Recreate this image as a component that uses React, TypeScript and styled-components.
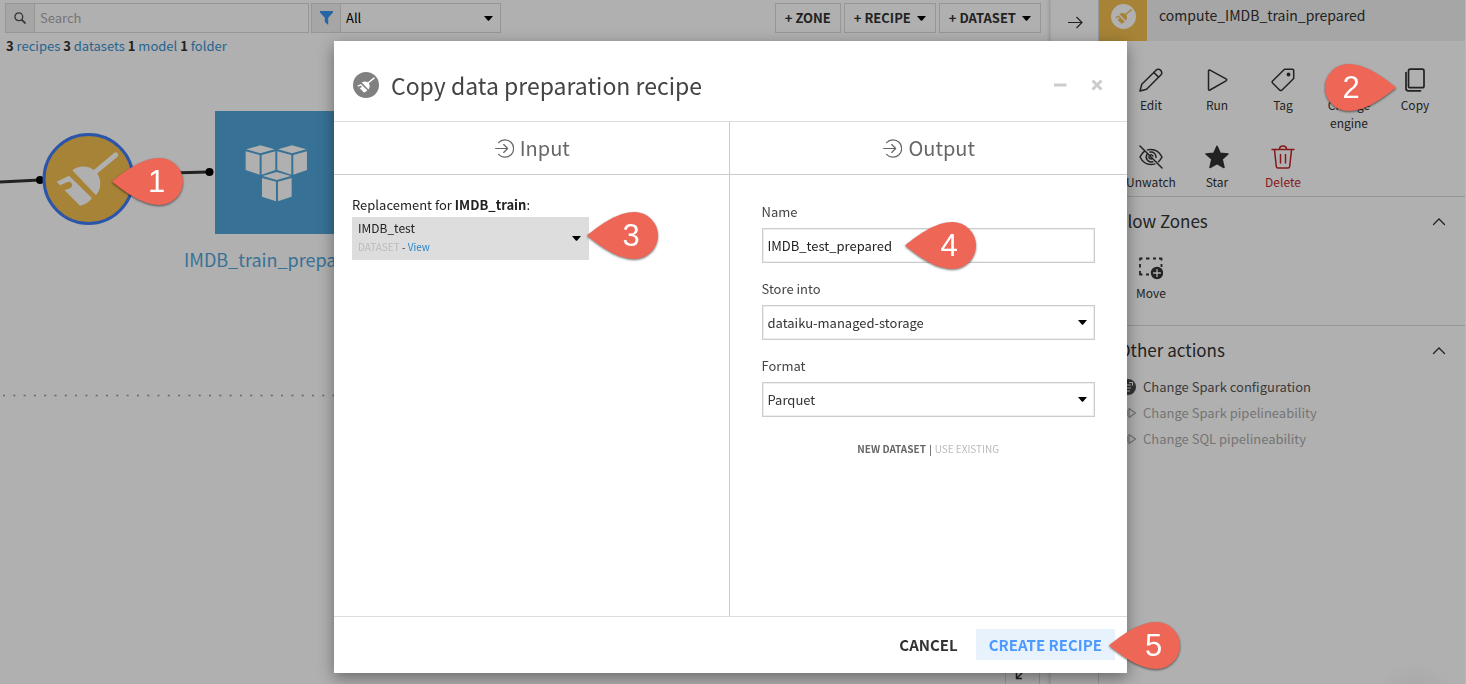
import React from 'react';
import styled, { createGlobalStyle } from 'styled-components';

const color = {
  page: '#b0b0b0',
  shade: '#a6a6a6',
  line: '#969696',
  ink: '#222222',
  link: '#26648f',
  node: '#377296',
  recipe: '#a68336',
  callout: '#ee6655',
};

const GlobalStyle = createGlobalStyle`
  * { box-sizing: border-box; }
  body {
    margin: 0;
    background: ${color.page};
    color: ${color.ink};
    font-family: "Noto Sans CJK SC", "Noto Sans", sans-serif;
    font-size: 13px;
    line-height: 18px;
  }
  button, input, select { font: inherit; color: inherit; margin: 0; }
  button { cursor: pointer; }
  a { text-decoration: none; }
`;

/* ---------- page shell ---------- */

const Shell = styled.div`
  display: flex;
  height: 100vh;
  min-height: 480px;
  overflow: hidden;
`;

const FlowPane = styled.main`
  flex: 1;
  min-width: 0;
  display: flex;
  flex-direction: column;
`;

const Toolbar = styled.div`
  display: flex;
  align-items: center;
  gap: 3px;
  padding: 3px 9px 0 5px;
`;

const Filters = styled.div`
  display: flex;
  gap: 2px;
`;

const Group = styled.div<{ $width: number }>`
  position: relative;
  display: flex;
  width: ${(p) => p.$width}px;
  height: 30px;
  border: 1px solid ${color.line};
`;

const GroupIcon = styled.label`
  display: flex;
  align-items: center;
  justify-content: center;
  flex: 0 0 29px;
  background: ${color.shade};
  border-right: 1px solid ${color.line};
`;

const SearchInput = styled.input`
  flex: 1;
  min-width: 0;
  border: 0;
  padding: 0 5px;
  background: transparent;
  outline: none;
  &::placeholder { color: #747474; opacity: 1; }
`;

const PlainSelect = styled.select`
  flex: 1;
  min-width: 0;
  appearance: none;
  border: 0;
  padding: 0 5px;
  background: transparent;
  outline: none;
`;

const FilterSelect = styled(PlainSelect)`
  color: #000;
`;

const CaretSvg = styled.svg`
  flex: none;
  display: block;
  pointer-events: none;
`;

const Caret = () => (
  <CaretSvg width="9" height="5" viewBox="0 0 9 5" aria-hidden="true">
    <path d="M0 0h9L5.2 4.5Q4.5 5 3.8 4.5z" fill="#000" />
  </CaretSvg>
);

const CaretSlot = styled.span`
  display: flex;
  align-items: center;
  padding-right: 7px;
`;

const Spacer = styled.div`
  flex: 1;
`;

const ToolButton = styled.button`
  display: flex;
  align-items: center;
  gap: 6px;
  height: 30px;
  padding: 0 9px;
  border: 1px solid ${color.line};
  background: transparent;
  font-size: 13px;
  font-weight: 700;
  white-space: nowrap;
`;

const Summary = styled.p`
  margin: 0;
  padding: 4px 6px;
  a { color: ${color.link}; }
`;

/* ---------- flow canvas ---------- */

const Canvas = styled.div`
  position: relative;
  flex: 1;
  overflow: hidden;
`;

const Graph = styled.svg`
  position: absolute;
  left: 0;
  top: 0;
  width: 100%;
  height: 100%;
`;

const NodeLabel = styled.div`
  position: absolute;
  left: 184px;
  top: 188px;
  color: ${color.node};
  font-size: 18px;
  line-height: 24px;
`;

const CornerButton = styled.button`
  position: absolute;
  right: 10px;
  bottom: -6px;
  width: 35px;
  height: 36px;
  padding: 0;
  border: 1px solid ${color.line};
  background: transparent;
`;

/* ---------- right panel ---------- */

const Panel = styled.aside`
  display: flex;
  flex: 0 0 416px;
  border-left: 1px solid #a4a4a4;
  box-shadow: -1px 0 3px rgba(0, 0, 0, 0.15);
`;

const Rail = styled.div`
  flex: 0 0 48px;
  display: flex;
  justify-content: center;
  align-items: flex-start;
  padding-top: 14px;
  border-right: 1px solid ${color.line};
`;

const BareButton = styled.button`
  display: flex;
  padding: 0;
  border: 0;
  background: none;
`;

const PanelBody = styled.div`
  flex: 1;
  min-width: 0;
  border-right: 1px solid #b8b8b8;
  background: radial-gradient(circle 44px at calc(100% - 50px) calc(100% + 22px), #a4a4a4, ${color.page});
`;

const PanelHead = styled.header`
  display: flex;
  height: 41px;
  background: ${color.shade};
`;

const RecipeTile = styled.div`
  flex: 0 0 48px;
  display: flex;
  justify-content: center;
  padding-top: 4px;
  background: ${color.recipe};
`;

const PanelTitle = styled.h2`
  margin: 0;
  padding: 5px 12px;
  font-size: 14px;
  line-height: 20px;
  font-weight: 400;
`;

const Section = styled.section<{ $last?: boolean }>`
  border-bottom: ${(p) => (p.$last ? '0' : `1px solid ${color.line}`)};
`;

const SectionHead = styled.div`
  display: flex;
  align-items: center;
  justify-content: space-between;
  padding: 12px 19px;
`;

const SectionTitle = styled.h3`
  margin: 0;
  font-size: 17px;
  line-height: 24px;
  font-weight: 400;
`;

const ActionGrid = styled.div<{ $top: number; $bottom: number }>`
  position: relative;
  display: grid;
  grid-template-columns: repeat(5, 66px);
  row-gap: 13px;
  padding: ${(p) => p.$top}px 0 ${(p) => p.$bottom}px 19px;
`;

const Action = styled.button<{ $danger?: boolean }>`
  display: flex;
  flex-direction: column;
  align-items: center;
  justify-content: flex-start;
  gap: 4px;
  padding: 0;
  border: 0;
  background: none;
  color: ${(p) => (p.$danger ? '#86181c' : color.ink)};
  font-size: 12px;
  line-height: 18px;
`;

const List = styled.ul`
  list-style: none;
  margin: 0;
  padding: 0 20px;
`;

const ListButton = styled.button<{ $muted?: boolean }>`
  display: flex;
  align-items: center;
  gap: 6px;
  height: 26px;
  padding: 0;
  border: 0;
  background: none;
  color: ${(p) => (p.$muted ? '#747474' : '#3a3a3a')};
`;

/* ---------- dialog ---------- */

const Overlay = styled.div`
  position: fixed;
  inset: 0;
  display: flex;
  justify-content: center;
  padding: 41px 5px 11px 0;
`;

const Dialog = styled.div`
  width: 100%;
  max-width: 793px;
  display: flex;
  flex-direction: column;
  background: #fff;
  color: #333;
  box-shadow: 0 5px 15px rgba(0, 0, 0, 0.4);
`;

const DialogHead = styled.header`
  display: flex;
  align-items: center;
  gap: 12px;
  height: 81px;
  padding: 8px 24px 0 19px;
  border-bottom: 1px solid #ddd;
`;

const DialogTitle = styled.h1`
  flex: 1;
  margin: 0;
  color: #444;
  font-size: 23px;
  line-height: 32px;
  font-weight: 400;
`;

const WindowButtons = styled.div`
  display: flex;
  gap: 24px;
`;

const Columns = styled.div`
  flex: 1;
  display: grid;
  grid-template-columns: calc(50% - 2px) 1fr;
`;

const Column = styled.section`
  display: flex;
  flex-direction: column;
  & + & { border-left: 1px solid #ccc; }
`;

const ColumnTitle = styled.h2`
  display: flex;
  align-items: center;
  justify-content: center;
  gap: 6px;
  height: 53px;
  margin: 0;
  padding-left: 2px;
  border-bottom: 1px solid #ccc;
  color: #666;
  font-size: 20px;
  line-height: 28px;
  font-weight: 400;
`;

const InputBody = styled.div`
  padding: 21px 18px;
`;

const Replacement = styled.label`
  display: block;
  color: #222;
`;

const DatasetPicker = styled.div`
  position: relative;
  display: flex;
  align-items: center;
  justify-content: space-between;
  width: 66%;
  height: 43px;
  margin-top: 3px;
  padding: 0 8px 0 6px;
  background: #ddd;
`;

const DatasetText = styled.div`
  flex: 1;
  display: flex;
  flex-direction: column;
  gap: 2px;
  padding-bottom: 3px;
`;

const DatasetSelect = styled(PlainSelect)`
  flex: none;
  height: 18px;
  padding: 0;
  color: #222;
  font-size: 12px;
  line-height: 18px;
`;

const DatasetMeta = styled.div`
  color: #333;
  font-size: 10px;
  line-height: 16px;
  span { color: #bbb; }
  a { color: #2a85cc; }
`;

const OutputBody = styled.div`
  display: flex;
  flex-direction: column;
  gap: 14px;
  padding: 25px 32px;
`;

const Field = styled.div`
  position: relative;
  display: flex;
  flex-direction: column;
  gap: 4px;
  line-height: 24px;
`;

const FieldLabel = styled.label`
  color: #444;
`;

const FieldBox = styled.div`
  display: flex;
  align-items: center;
  height: 35px;
  border: 1px solid #ccc;
  box-shadow: inset 0 0 0 1px #eee;
`;

const FieldInput = styled.input`
  flex: 1;
  min-width: 0;
  border: 0;
  padding: 0 5px;
  background: transparent;
  color: #222;
  outline: none;
`;

const Mode = styled.div`
  display: flex;
  justify-content: center;
  gap: 3px;
  padding-top: 8px;
  font-size: 10px;
  line-height: 20px;
`;

const ModeButton = styled.button<{ $active?: boolean }>`
  padding: 0;
  border: 0;
  background: none;
  font-weight: ${(p) => (p.$active ? 700 : 400)};
  color: ${(p) => (p.$active ? '#666' : '#bbb')};
`;

const DialogFoot = styled.footer`
  position: relative;
  display: flex;
  align-items: center;
  justify-content: flex-end;
  gap: 5px;
  height: 57px;
  padding: 0 12px 1px;
  border-top: 1px solid #ddd;
`;

const FootButton = styled.button<{ $primary?: boolean }>`
  height: 31px;
  padding: 0 13px;
  border: 0;
  background: ${(p) => (p.$primary ? '#e8f2fd' : 'none')};
  color: ${(p) => (p.$primary ? '#4c9aff' : '#333')};
  font-size: 15px;
  font-weight: 700;
`;

/* ---------- callouts ---------- */

const CalloutBox = styled.span<{ $x: string; $y: string }>`
  position: absolute;
  left: ${(p) => p.$x};
  top: ${(p) => p.$y};
  width: 71px;
  height: 47px;
  z-index: 5;
  pointer-events: none;
  filter: drop-shadow(0 1px 1px rgba(0, 0, 0, 0.55));
  svg { position: absolute; inset: 0; }
`;

const CalloutDigit = styled.span<{ $flip?: boolean }>`
  position: absolute;
  top: 0;
  ${(p) => (p.$flip ? 'left: 0; width: 52px;' : 'right: 0; width: 53px;')}
  text-align: center;
  color: #fff;
  font-family: "Liberation Sans", Arial, sans-serif;
  font-size: 31px;
  line-height: 47px;
`;

function Callout({ n, x, y, flip }: { n: number; x: string; y: string; flip?: boolean }) {
  return (
    <CalloutBox $x={x} $y={y}>
      <svg width="71" height="47" viewBox="0 0 71 47" aria-hidden="true">
        <path
          transform={flip ? 'translate(71 0) scale(-1 1)' : undefined}
          d="M0 23.5C14 12 31 0 47.5 0a23.5 23.5 0 0 1 0 47C31 47 14 35 0 23.5z"
          fill={color.callout}
        />
      </svg>
      <CalloutDigit $flip={flip}>{n}</CalloutDigit>
    </CalloutBox>
  );
}

/* ---------- drawings ---------- */

const Broom = ({ fill }: { fill: string }) => (
  <g fill={fill}>
    <path d="M347 165L284 217" stroke={fill} strokeWidth="15" strokeLinecap="round" />
    <path d="M217 211C232 198 262 195 280 209C302 222 310 262 288 286z" />
    <path d="M170 245L207 227L276 294Q262 313 240 317L193 270L205 267Q219 262 216 252Q213 243 202 246L180 256z" />
  </g>
);

const BroomBadge = ({ size, disc, fill }: { size: number; disc: string; fill: string }) => (
  <svg width={size} height={size} viewBox="124 100 276 276" aria-hidden="true">
    <circle cx="262" cy="238" r="138" fill={disc} />
    <Broom fill={fill} />
  </svg>
);

const Cube = ({ x, y }: { x: number; y: number }) => (
  <g transform={`translate(${x} ${y})`} fill={color.page}>
    <path d="M2 12L44 0L87 12L44 24z" />
    <path d="M0 18L42 29V88L0 74z" />
    <path d="M48 29L89 18V74L48 88z" />
  </g>
);

const FlowGraph = () => (
  <Graph aria-hidden="true">
    <g transform="translate(0 -59)">
      <path d="M0 182L40 180M130 174L209 172" stroke="#222" strokeWidth="3" />
      <circle cx="40" cy="180" r="4" />
      <circle cx="209.500" cy="172" r="4" />
      <circle cx="88.500" cy="179" r="44.500" fill={color.recipe} stroke="#2a55aa" strokeWidth="3" />
      <g transform="translate(0 100) scale(0.3333)">
        <Broom fill={color.page} />
      </g>
      <path d="M215 111h124v123H215z" fill={color.node} />
      <g transform="translate(0 100) scale(0.3333)">
        <Cube x={737} y={136} />
        <Cube x={832} y={136} />
        <Cube x={786} y={216} />
      </g>
      <path d="M3 395.500H1040" stroke="#666" strokeWidth="1.500" strokeDasharray="2 8.300" />
    </g>
  </Graph>
);

const Stroke = ({ size = 24, w = 1.5, children }: { size?: number; w?: number; children: React.ReactNode }) => (
  <svg
    width={size}
    height={size}
    viewBox="0 0 24 24"
    fill="none"
    stroke="currentColor"
    strokeWidth={w}
    strokeLinecap="round"
    strokeLinejoin="round"
    aria-hidden="true"
  >
    {children}
  </svg>
);

const icons = {
  edit: (
    <Stroke>
      <path d="M1 23L2.800 16.300L17 2.200Q19.500 .2 21.800 2.400Q23.800 4.700 21.800 7L7.600 21.200zM14.800 4.400L19.600 9.200" />
    </Stroke>
  ),
  run: (
    <Stroke>
      <path d="M3.500 3.200Q3.500 1.500 5 2.200L21 10.800Q22.500 11.800 21 12.800L5 22Q3.500 22.700 3.500 21z" />
    </Stroke>
  ),
  tag: (
    <Stroke>
      <path d="M21.500 1.300H13.500L1.600 13Q.7 14 1.600 15L8.800 22.200Q9.800 23 10.800 22.200L22.700 10.500V2.500Q22.700 1.300 21.500 1.300z" />
      <circle cx="17.500" cy="6.500" r="1.200" fill="currentColor" />
    </Stroke>
  ),
  engine: (
    <Stroke>
      <circle cx="12" cy="12" r="8" />
    </Stroke>
  ),
  copy: (
    <Stroke w={1.7}>
      <rect x="5.500" y="1.200" width="15.500" height="18.500" rx="1.800" />
      <path d="M3 4.500V20.500Q3 22.800 5.300 22.800H17.500" />
    </Stroke>
  ),
  unwatch: (
    <Stroke>
      <path d="M1 1L23 23M5.300 6.300Q2.500 8.500 1 12Q4.800 19.500 12 19.500Q14 19.500 15.800 18.900M8.500 4.900Q10 4.500 12 4.500Q19.200 4.500 23 12Q21.600 14.800 19.500 16.700" />
      <path d="M8 9.300A5 5 0 0 0 13.800 16.700M11 7.100A5 5 0 0 1 17 12.500M10.700 10.500Q12.500 9 14 11M9.800 12Q10.500 14 12.500 14" />
    </Stroke>
  ),
  star: (
    <Stroke>
      <path d="M12 1.200L15.200 8.300L23 9L17.100 14.200L19 22.500L12 18.500L5 22.500L6.900 14.200L1 9L8.800 8.300z" fill="currentColor" />
    </Stroke>
  ),
  trash: (
    <Stroke>
      <path d="M1 4.600H23M3.500 4.800L5.300 21.300Q5.500 22.900 7 22.900H17Q18.500 22.900 18.700 21.300L20.500 4.800M8.500 4.300Q8.500 1 12 1T15.500 4.300M9.500 9.500V18M14.500 9.500V18" />
    </Stroke>
  ),
  move: (
    <Stroke>
      <path
        d="M1 4.500V2.500H3.500M7 2.500H10.500M14 2.500H17M20 2.500H22.500V4.500M22.500 8V11M1 8V11.500M1 15V18.500H3.500M7 18.500H10"
        strokeLinecap="butt"
        strokeWidth="1.800"
      />
      <circle cx="18" cy="17" r="6.200" fill="currentColor" stroke="none" />
      <path d="M18 13.500V20.500M14.500 17H21.500" stroke="#b0b0b0" strokeWidth="1.300" />
    </Stroke>
  ),
};

const InArrow = () => (
  <Stroke size={19} w={1.5}>
    <path d="M4.500 4.500A11 11 0 1 1 4.500 19.500M.8 12H15.500M11 7L16 12L11 17" />
  </Stroke>
);

const Chevron = () => (
  <svg width="14" height="9" viewBox="0 0 14 9" fill="none" stroke="#222" strokeWidth="1.300" aria-hidden="true">
    <path d="M1.500 7.500L7 2L12.500 7.500" strokeLinecap="round" />
  </svg>
);

const SparkConfig = () => (
  <svg width="18" height="16" viewBox="0 0 18 16" aria-hidden="true">
    <circle cx="9" cy="8" r="8" fill="#333" />
    <path d="M5 6h7M5 9h7M5 12h6M10 3.500h3.500v3" stroke={color.page} strokeWidth="1.200" fill="none" />
  </svg>
);

const Pipeline = () => (
  <svg width="18" height="14" viewBox="0 0 18 14" fill="none" stroke="#747474" strokeWidth="1.200" aria-hidden="true">
    <path d="M10 2.500L16.500 7L10 11.500zM8 4v6M6 5v4" strokeLinejoin="round" />
  </svg>
);

/* ---------- page ---------- */

export default function App() {
  return (
    <>
      <GlobalStyle />
      <Shell>
        <FlowPane>
          <Toolbar>
            <Filters>
              <Group $width={304}>
                <GroupIcon htmlFor="search" aria-label="Search">
                  <svg width="12" height="12" viewBox="0 0 12 12" fill="none" stroke="#333" strokeWidth="1.300">
                    <circle cx="4.800" cy="4.800" r="3.900" />
                    <path d="M7.600 7.600L11.500 11.500" strokeWidth="1.700" />
                  </svg>
                </GroupIcon>
                <SearchInput id="search" placeholder="Search" />
              </Group>
              <Group $width={190}>
                <GroupIcon htmlFor="filter" aria-label="Filter">
                  <svg width="13" height="14" viewBox="0 0 13 14">
                    <path d="M0 0H13V1.500L8.200 6.800V14L4.800 11V6.800L0 1.500z" fill="#2766a6" />
                  </svg>
                </GroupIcon>
                <FilterSelect id="filter">
                  <option>All</option>
                </FilterSelect>
                <CaretSlot>
                  <Caret />
                </CaretSlot>
              </Group>
            </Filters>
            <Spacer />
            <ToolButton>+ ZONE</ToolButton>
            <ToolButton>
              + RECIPE <Caret />
            </ToolButton>
            <ToolButton>
              + DATASET <Caret />
            </ToolButton>
          </Toolbar>
          <Summary>
            <b>3</b> <a href="#recipes">recipes</a> <b>3</b> <a href="#datasets">datasets</a> <b>1</b>{' '}
            <a href="#model">model</a> <b>1</b> <a href="#folder">folder</a>
          </Summary>
          <Canvas>
            <FlowGraph />
            <NodeLabel>IMDB_train_prepared</NodeLabel>
            <Callout n={1} x="112px" y="99px" />
            <CornerButton aria-label="Fit the flow">
              <svg width="33" height="34" viewBox="0 0 33 34" fill="none" stroke="#222" strokeWidth="1.500">
                <path d="M10.500 18V23.500H16M10.500 23.500L16.500 17.500" />
              </svg>
            </CornerButton>
          </Canvas>
        </FlowPane>

        <Panel>
          <Rail>
            <BareButton aria-label="Collapse panel">
              <svg width="16" height="16" viewBox="0 0 16 16" fill="none" stroke="#222" strokeWidth="1.200">
                <path d="M1 8.500H14.500M9.500 3L15 8.500L9.500 14" />
              </svg>
            </BareButton>
          </Rail>
          <PanelBody>
            <PanelHead>
              <RecipeTile>
                <BroomBadge size={25} disc={color.page} fill={color.recipe} />
              </RecipeTile>
              <PanelTitle>compute_IMDB_train_prepared</PanelTitle>
            </PanelHead>
            <Section>
              <ActionGrid $top={27} $bottom={5}>
                <Action>{icons.edit}Edit</Action>
                <Action>{icons.run}Run</Action>
                <Action>{icons.tag}Tag</Action>
                <Action>{icons.engine}Change engine</Action>
                <Action>{icons.copy}Copy</Action>
                <Action>{icons.unwatch}Unwatch</Action>
                <Action>{icons.star}Star</Action>
                <Action $danger>{icons.trash}Delete</Action>
                <Callout n={2} x="226px" y="23px" flip />
              </ActionGrid>
            </Section>
            <Section>
              <SectionHead>
                <SectionTitle>Flow Zones</SectionTitle>
                <BareButton aria-label="Collapse Flow Zones">
                  <Chevron />
                </BareButton>
              </SectionHead>
              <ActionGrid $top={11} $bottom={23}>
                <Action>{icons.move}Move</Action>
              </ActionGrid>
            </Section>
            <Section $last>
              <SectionHead>
                <SectionTitle>Other actions</SectionTitle>
                <BareButton aria-label="Collapse Other actions">
                  <Chevron />
                </BareButton>
              </SectionHead>
              <List>
                <li>
                  <ListButton>
                    <SparkConfig />
                    Change Spark configuration
                  </ListButton>
                </li>
                <li>
                  <ListButton $muted>
                    <Pipeline />
                    Change Spark pipelineability
                  </ListButton>
                </li>
                <li>
                  <ListButton $muted>
                    <Pipeline />
                    Change SQL pipelineability
                  </ListButton>
                </li>
              </List>
            </Section>
          </PanelBody>
        </Panel>
      </Shell>

      <Overlay>
        <Dialog role="dialog" aria-labelledby="dialog-title">
          <DialogHead>
            <BroomBadge size={26} disc="#808080" fill="#fff" />
            <DialogTitle id="dialog-title">Copy data preparation recipe</DialogTitle>
            <WindowButtons>
              <BareButton aria-label="Minimize">
                <svg width="13" height="12" viewBox="0 0 13 12">
                  <path d="M0 4.500H12.500V7.500H0z" fill="#ccc" />
                </svg>
              </BareButton>
              <BareButton aria-label="Close">
                <svg width="12" height="12" viewBox="0 0 12 12" stroke="#ccc" strokeWidth="3">
                  <path d="M1.500 1.500L10.500 10.500M10.500 1.500L1.500 10.500" />
                </svg>
              </BareButton>
            </WindowButtons>
          </DialogHead>
          <Columns>
            <Column>
              <ColumnTitle>
                <InArrow />
                Input
              </ColumnTitle>
              <InputBody>
                <Replacement htmlFor="replacement">
                  Replacement for <b>IMDB_train</b>:
                </Replacement>
                <DatasetPicker>
                  <DatasetText>
                    <DatasetSelect id="replacement">
                      <option>IMDB_test</option>
                    </DatasetSelect>
                    <DatasetMeta>
                      <span>DATASET</span> - <a href="#view">View</a>
                    </DatasetMeta>
                  </DatasetText>
                  <Caret />
                  <Callout n={3} x="calc(100% - 2px)" y="-5px" />
                </DatasetPicker>
              </InputBody>
            </Column>
            <Column>
              <ColumnTitle>
                <InArrow />
                Output
              </ColumnTitle>
              <OutputBody>
                <Field>
                  <FieldLabel htmlFor="name">Name</FieldLabel>
                  <FieldBox>
                    <FieldInput id="name" defaultValue="IMDB_test_prepared" />
                  </FieldBox>
                  <Callout n={4} x="143px" y="22px" />
                </Field>
                <Field>
                  <FieldLabel htmlFor="store">Store into</FieldLabel>
                  <FieldBox>
                    <PlainSelect id="store">
                      <option>dataiku-managed-storage</option>
                    </PlainSelect>
                    <CaretSlot>
                      <Caret />
                    </CaretSlot>
                  </FieldBox>
                </Field>
                <Field>
                  <FieldLabel htmlFor="format">Format</FieldLabel>
                  <FieldBox>
                    <PlainSelect id="format">
                      <option>Parquet</option>
                    </PlainSelect>
                    <CaretSlot>
                      <Caret />
                    </CaretSlot>
                  </FieldBox>
                </Field>
                <Mode>
                  <ModeButton $active>NEW DATASET</ModeButton>|<ModeButton>USE EXISTING</ModeButton>
                </Mode>
              </OutputBody>
            </Column>
          </Columns>
          <DialogFoot>
            <FootButton>CANCEL</FootButton>
            <FootButton $primary>CREATE RECIPE</FootButton>
            <Callout n={5} x="calc(100% - 18px)" y="5px" />
          </DialogFoot>
        </Dialog>
      </Overlay>
    </>
  );
}
